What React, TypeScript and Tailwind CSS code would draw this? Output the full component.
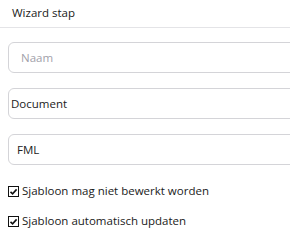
import React, { useState } from 'react';

const font = { fontFamily: '"Open Sans", "Noto Sans", sans-serif' };

function Check({ label }: { label: string }) {
  const [on, setOn] = useState(true);
  return (
    <label className="flex items-center gap-[3px] h-[16px] text-[11.5px] text-[#1a1a1a] cursor-pointer">
      <span
        onClick={() => setOn(v => !v)}
        className="w-[11px] h-[11px] border border-[#111] flex items-center justify-center bg-white"
      >
        {on && (
          <svg width="9" height="9" viewBox="0 0 9 9">
            <path d="M1.5 4.8 L3.6 6.8 L7.6 2.4" fill="none" stroke="#111" strokeWidth="1.6" />
          </svg>
        )}
      </span>
      <span>{label}</span>
    </label>
  );
}

export default function App() {
  const ic =
    'w-[300px] h-[31px] rounded-[6px] border border-[#d4d4d8] bg-white text-[11.5px] text-[#222] outline-none';
  return (
    <div className="w-[290px] h-[240px] bg-white overflow-hidden" style={font}>
      <div className="h-[28px] px-[12px] pt-[4px] text-[11.5px] text-[#1a1a1a] border-b border-[#e4e4e7]">
        Wizard stap
      </div>
      <div className="pl-[8px] pt-[14px] flex flex-col gap-[15px]">
        <input placeholder="Naam" className={`${ic} pl-[12px] placeholder:text-[#a1a1aa]`} />
        <input defaultValue="Document" className={`${ic} pl-[2px]`} />
        <input defaultValue="FML" className={`${ic} pl-[8px]`} />
      </div>
      <div className="pl-[8px] pt-[18px] flex flex-col gap-[14px]">
        <Check label="Sjabloon mag niet bewerkt worden" />
        <Check label="Sjabloon automatisch updaten" />
      </div>
    </div>
  );
}
